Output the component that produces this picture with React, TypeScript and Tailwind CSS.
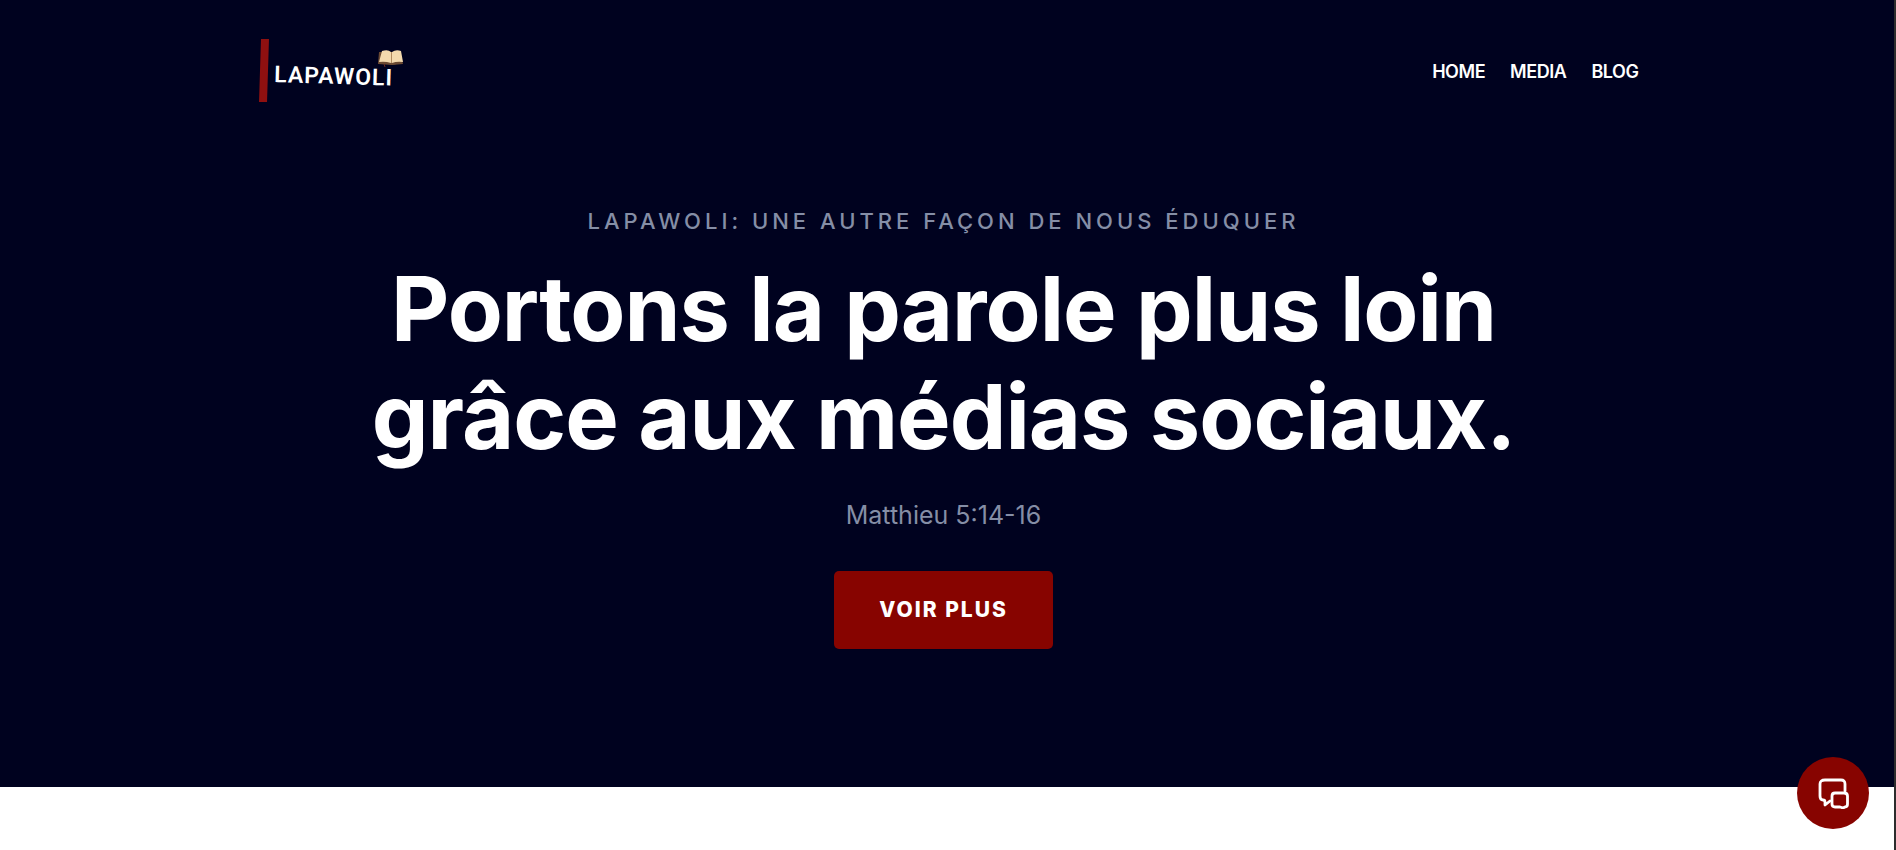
const links = ['HOME', 'MEDIA', 'BLOG'];

function Logo() {
  return (
    <svg width="150" height="70" viewBox="0 0 150 70" role="img" aria-label="Lapawoli">
      <path d="M7 3h8l-2 63H5z" fill="#8f1010" />
      <text
        x="20"
        y="46"
        transform="rotate(1.7 20 46)"
        fill="#fff"
        fontFamily="Roboto, sans-serif"
        fontWeight="600"
        fontSize="23"
        letterSpacing="1"
      >
        LAPAWOLI
      </text>
      <path d="M127 16l-3 12q10-1 14 1 8-2 10-1h0l-2-12z" fill="#6b4a33" />
      <path d="M125 16l-1 12 14 1 11-1-3-12z" fill="#6b4a33" />
      <path d="M128 15q6-2 9 1v11q-6-2-12-1z" fill="#f3d9ae" />
      <path d="M138 16q4-3 9-1l2 11q-6-1-11 1z" fill="#f3d9ae" />
      <path d="M137.500 16v11" stroke="#b08a60" />
      <path d="M130 28l1 3" stroke="#6b2a20" />
    </svg>
  );
}

function ChatIcon() {
  return (
    <svg width="32" height="32" viewBox="0 0 32 32" fill="none" stroke="#fff" strokeWidth="2.800" strokeLinejoin="round" strokeLinecap="round">
      <path d="M28 14V7q0-4-4-4H8Q3 3 3 7v12q0 4 3 4 2 0 2 2v3l5-4" />
      <path d="M18 16h9q3.500 0 3.500 3v8q0 3-2.500 3l-2 1-3-1h-5q-3 0-3-3v-8q0-3 3-3z" />
    </svg>
  );
}

export default function App() {
  return (
    <div className="min-h-screen border-r-2 border-[#2d2d2d] bg-white font-['Inter',sans-serif]">
      <div className="bg-[#00021f] pr-[7px] pb-[138px]">
        <header className="mx-auto flex max-w-[1390px] items-center justify-between pt-9">
          <a href="#home" className="ml-[5px]">
            <Logo />
          </a>
          <nav className="flex gap-[25px] pt-0.5 text-[18px] leading-6 font-semibold tracking-tight text-white">
            {links.map((link) => (
              <a key={link} href={'#' + link.toLowerCase()}>
                {link}
              </a>
            ))}
          </nav>
        </header>
        <main className="mx-auto flex max-w-[1200px] flex-col items-center pt-[97px] text-center">
          <p className="text-[22px] leading-9 font-medium tracking-[4px] text-[#858ea6]">
            LAPAWOLI: UNE AUTRE FAÇON DE NOUS ÉDUQUER
          </p>
          <h1 className="mt-4 text-[90px] leading-[108px] font-bold tracking-[-1px] text-white">
            Portons la parole plus loin
            <br />
            grâce aux médias sociaux.
          </h1>
          <p className="mt-6 text-[25px] leading-10 text-[#858ea6]">Matthieu 5:14-16</p>
          <a
            href="#plus"
            className="mt-9 flex h-[78px] items-center rounded-[5px] bg-[#870400] px-[45px] text-[21px] font-extrabold tracking-[2px] text-white"
          >
            VOIR PLUS
          </a>
        </main>
      </div>
      <button
        aria-label="Chat"
        className="fixed right-[27px] bottom-[21px] flex size-[72px] items-center justify-center rounded-full bg-[#870400]"
      >
        <ChatIcon />
      </button>
    </div>
  );
}
